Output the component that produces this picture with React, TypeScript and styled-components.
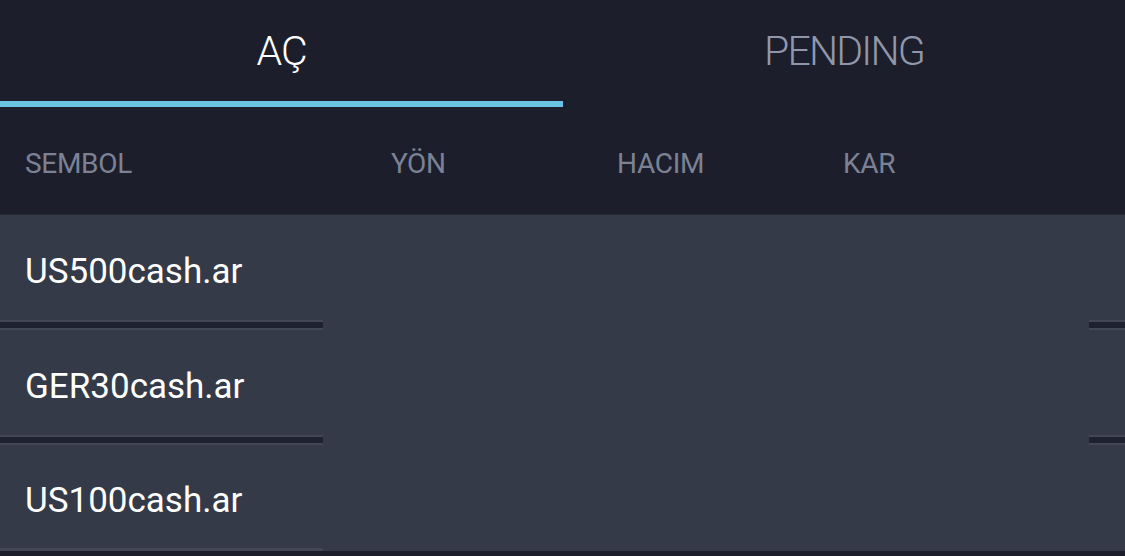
import React from "react";
import styled, { createGlobalStyle } from "styled-components";

const Global = createGlobalStyle`
  html, body { margin: 0; padding: 0; background: #1c1f2b; }
  body { font-family: Roboto, "Noto Sans", sans-serif; width: 1125px; height: 556px; overflow: hidden; }
`;

const Page = styled.div`
  width: 1125px;
  height: 556px;
  background: #1c1f2b;
  display: flex;
  flex-direction: column;
`;

const TabBar = styled.div`
  display: flex;
  height: 107px;
`;

const Tab = styled.div<{ $active?: boolean }>`
  flex: 0 0 ${(p) => (p.$active ? "563px" : "562px")};
  display: flex;
  align-items: center;
  justify-content: center;
  box-sizing: border-box;
  padding-bottom: 0;
  font-family: Roboto, sans-serif;
  font-weight: 300;
  font-size: 41px;
  letter-spacing: ${(p) => (p.$active ? "-1px" : "-1.8px")};
  color: ${(p) => (p.$active ? "#ffffff" : "#9197aa")};
  border-bottom: 6px solid ${(p) => (p.$active ? "#6cc1e5" : "transparent")};
`;

const HeaderRow = styled.div`
  display: grid;
  grid-template-columns: 366px 226px 226px 1fr;
  align-items: center;
  height: 108px;
  padding-left: 25px;
  padding-top: 5px;
  box-sizing: border-box;
  border-bottom: 1px solid #262a37;
`;

const HeaderCell = styled.div`
  font-family: Roboto, sans-serif;
  font-size: 28px;
  font-weight: 400;
  letter-spacing: -0.3px;
  color: #7c8295;
`;

const List = styled.div`
  display: flex;
  flex-direction: column;
`;

const Row = styled.div<{ $h: number }>`
  height: ${(p) => p.$h}px;
  background: #343a48;
  display: flex;
  align-items: center;
  padding-left: 25px;
  box-sizing: border-box;
`;

const Symbol = styled.span`
  font-family: Roboto, sans-serif;
  font-size: 35px;
  font-weight: 400;
  color: #ffffff;
  padding-top: 8px;
`;

const Separator = styled.div`
  display: flex;
  height: 10px;
  background: #343a48;
`;

const SepSegment = styled.div<{ $w: number }>`
  flex: 0 0 ${(p) => p.$w}px;
  box-sizing: border-box;
  background: #1e2130;
  border-top: 2px solid #414757;
  border-bottom: 2px solid #414757;
`;

const SepGap = styled.div`
  flex: 1;
`;

const BottomEdge = styled.div`
  display: flex;
  height: 3px;
  background: #343a48;
`;

const BottomLine = styled.div`
  flex: 0 0 323px;
  background: #414757;
`;

const rows = ["US500cash.ar", "GER30cash.ar", "US100cash.ar"];

export default function App() {
  return (
    <Page>
      <Global />
      <TabBar>
        <Tab $active>AÇ</Tab>
        <Tab>PENDING</Tab>
      </TabBar>
      <HeaderRow>
        <HeaderCell>SEMBOL</HeaderCell>
        <HeaderCell>YÖN</HeaderCell>
        <HeaderCell>HACIM</HeaderCell>
        <HeaderCell>KAR</HeaderCell>
      </HeaderRow>
      <List>
        {rows.map((r, i) => (
          <React.Fragment key={r}>
            <Row $h={i === 2 ? 103 : 105}>
              <Symbol>{r}</Symbol>
            </Row>
            {i < rows.length - 1 && (
              <Separator>
                <SepSegment $w={323} />
                <SepGap />
                <SepSegment $w={36} />
              </Separator>
            )}
          </React.Fragment>
        ))}
        <BottomEdge>
          <BottomLine />
        </BottomEdge>
      </List>
    </Page>
  );
}
